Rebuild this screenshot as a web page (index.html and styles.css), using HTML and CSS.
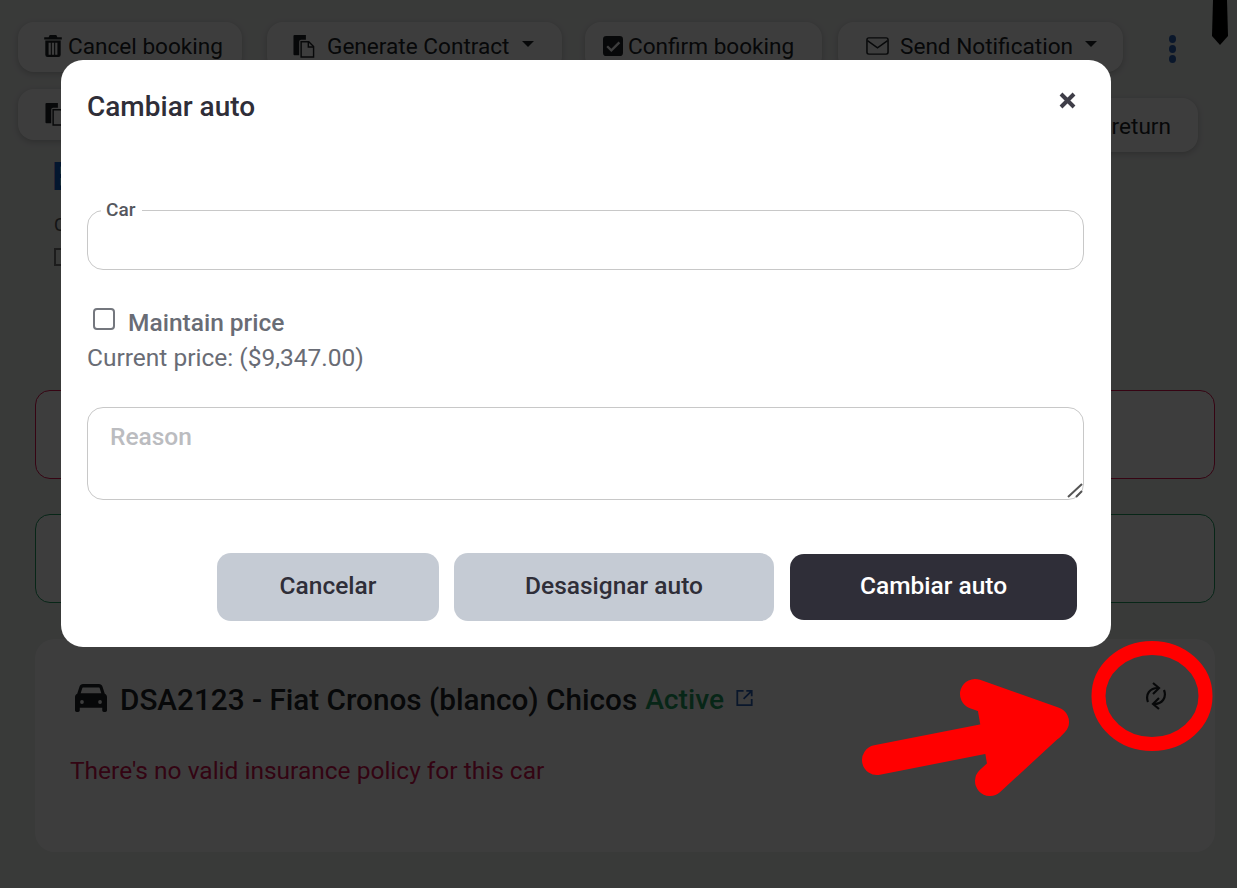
FILE: index.html
```html
<!DOCTYPE html>
<html>
<head>
    <title>Booking</title>
    <link rel="stylesheet" href="styles.css">
</head>
<body>
    <svg class="user-tie" viewBox="0 0 16 46"><path d="M1 0 L15 0 L16 36 L8 45 L0 36 Z"/></svg>

    <div class="actions">
        <button class="action-btn btn-cancel">
            <svg class="icon-trash" viewBox="0 0 16 20"><path d="M5 0h6l1 2h4v2H0V2h4zM1 5h14v13a2 2 0 0 1-2 2H3a2 2 0 0 1-2-2zm3 2v11h2V7zm3 0v11h2V7zm3 0v11h2V7z" fill-rule="evenodd"/></svg>
            Cancel booking
        </button>
        <button class="action-btn btn-contract">
            <svg class="icon-docs" viewBox="0 0 22 24"><path d="M1 0h12v5H8a2 2 0 0 0-2 2v14H1a1 1 0 0 1-1-1V1a1 1 0 0 1 1-1z"/><path d="M8 7h8l5 5v11H8z" fill="none" stroke="currentColor" stroke-width="1.5"/><path d="M15.500 7v5.500H21" fill="none" stroke="currentColor" stroke-width="1.500"/></svg>
            <span class="gap-text">Generate Contract</span><span class="caret"></span>
        </button>
        <button class="action-btn btn-confirm">
            <svg class="icon-check" viewBox="0 0 18 18"><path d="M3 0h12a3 3 0 0 1 3 3v12a3 3 0 0 1-3 3H3a3 3 0 0 1-3-3V3a3 3 0 0 1 3-3zm11 5-6.500 6.500L4.500 8.500 3 10l4.500 4.500 8-8z" fill-rule="evenodd"/></svg>
            Confirm booking
        </button>
        <button class="action-btn btn-notify">
            <svg class="icon-mail" viewBox="0 0 24 20" preserveAspectRatio="none"><rect x="1" y="1" width="22" height="18" rx="2" fill="none" stroke="currentColor" stroke-width="1.600"/><path d="M1.500 4 12 12l10.500-8" fill="none" stroke="currentColor" stroke-width="1.600"/></svg>
            <span class="gap-text">Send Notification</span><span class="caret"></span>
        </button>
        <div class="kebab"><i></i><i></i><i></i></div>
    </div>

    <div class="actions-second">
        <button class="action-btn btn-docs">
            <svg class="icon-docs" viewBox="0 0 22 24"><path d="M1 0h12v5H8a2 2 0 0 0-2 2v14H1a1 1 0 0 1-1-1V1a1 1 0 0 1 1-1z"/><path d="M8 7h8l5 5v11H8z" fill="none" stroke="currentColor" stroke-width="1.5"/></svg>
        </button>
        <button class="action-btn btn-return">Register return</button>
    </div>

    <div class="booking-head">
        <div class="booking-title">B</div>
        <div class="booking-sub">C</div>
        <div class="booking-box"></div>
    </div>

    <div class="notice notice-red"></div>
    <div class="notice notice-green"></div>

    <div class="car-card">
        <div class="car-top">
            <div class="car-name">
                <svg class="icon-car" viewBox="15 77 482 391" preserveAspectRatio="none"><path fill="currentColor" d="M135 77h242c24 0 45 15 53 38l34 97c20 8 33 27 33 48v184c0 13-11 24-24 24h-24c-13 0-24-11-24-24v-36H87v36c0 13-11 24-24 24H39c-13 0-24-11-24-24V260c0-21 13-40 33-48l34-97c8-23 29-38 53-38zm0 48c-4 0-7 3-8 6l-26 75h310l-26-75c-1-3-4-6-8-6zm-15 177a28 28 0 1 0 0 56 28 28 0 0 0 0-56zm272 0a28 28 0 1 0 0 56 28 28 0 0 0 0-56z" fill-rule="evenodd"/></svg>
                <span>DSA2123 - Fiat Cronos (blanco) Chicos</span>
                <span class="status-active">Active</span>
                <svg class="icon-link" viewBox="0 0 20 20"><path d="M9 2H2v16h16v-7M12 2h6v6M18 2 9 11" fill="none" stroke="currentColor" stroke-width="2"/></svg>
            </div>
            <svg class="icon-swap" viewBox="0 0 22 28" fill="none" stroke="currentColor" stroke-width="2.200"><path d="M3 20C0 12 5 6 13 6"/><path d="M19 8C22 16 17 22 9 22"/><path d="M8 1 14 6 8 12"/><path d="M14 16 8 22 14 27"/></svg>
        </div>
        <p class="car-warning">There's no valid insurance policy for this car</p>
    </div>

    <div class="backdrop"></div>

    <div class="modal">
        <div class="modal-header">
            <h2>Cambiar auto</h2>
            <svg class="modal-close" viewBox="0 0 17 17"><path d="M2 2 15 15M15 2 2 15" fill="none" stroke="currentColor" stroke-width="4"/></svg>
        </div>
        <fieldset class="car-field">
            <legend>Car</legend>
        </fieldset>
        <label class="check-row">
            <input type="checkbox">
            <span>Maintain price</span>
        </label>
        <div class="current-price">Current price: ($9,347.00)</div>
        <div class="reason-wrap">
            <textarea class="reason" placeholder="Reason"></textarea>
            <svg class="grip" viewBox="0 0 16 15"><path d="M1 14 15 1M9 14 15 8" fill="none" stroke="#555" stroke-width="2"/></svg>
        </div>
        <div class="modal-footer">
            <button class="modal-btn btn-grey btn-w1">Cancelar</button>
            <button class="modal-btn btn-grey btn-w2">Desasignar auto</button>
            <button class="modal-btn btn-dark">Cambiar auto</button>
        </div>
    </div>

    <svg class="markup" viewBox="0 0 1237 888">
        <ellipse cx="1152" cy="696" rx="53.500" ry="48" fill="none" stroke="#ff0000" stroke-width="14"/>
        <path d="M877 760 L1050 726" fill="none" stroke="#ff0000" stroke-width="30" stroke-linecap="round"/>
        <path d="M975 694 L1054 722 L990 781" fill="#ff0000" stroke="#ff0000" stroke-width="30" stroke-linejoin="round" stroke-linecap="round"/>
    </svg>
</body>
</html>
```

FILE: styles.css
```css
* { box-sizing: border-box; }
html, body { height: 100%; }
body { margin: 0; height: 888px; overflow: hidden; background: #eef0ef; font-family: Roboto, sans-serif; color: #212529; padding: 22px 18px 0; position: relative; }

.user-tie { position: absolute; top: 0; left: 1212px; width: 16px; height: 46px; fill: #000; }

.actions { display: flex; align-items: center; height: 50px; }
.actions-second { display: flex; justify-content: space-between; align-items: flex-start; width: 1180px; height: 63px; margin-top: 17px; }
.action-btn { display: flex; align-items: center; height: 100%; padding: 0 0 2px 26px; background: #fff; border: none; border-radius: 16px; box-shadow: 0 2px 6px rgba(0, 0, 0, .2); font-family: Roboto, sans-serif; font-size: 22.6px; color: #212529; white-space: nowrap; }
.btn-cancel { width: 224px; gap: 6px; margin-right: 25px; }
.btn-contract { width: 295px; padding-left: 25px; margin-right: 23px; }
.btn-confirm { width: 237px; padding-left: 18px; gap: 5px; margin-right: 16px; }
.btn-notify { width: 285px; padding-left: 28px; }
.btn-docs { width: 220px; height: 51px; padding-bottom: 0; }
.btn-return { width: 300px; height: 54px; margin-top: 9px; padding: 2px 27px 0 0; justify-content: flex-end; }
.gap-text { margin-left: 11px; }
.caret { margin-left: 12px; margin-top: -4px; border-top: 6px solid #212529; border-left: 6px solid transparent; border-right: 6px solid transparent; }
.icon-trash { width: 18px; height: 22px; fill: currentColor; flex: none; }
.icon-check { width: 20px; height: 20px; fill: currentColor; flex: none; }
.icon-docs { width: 24px; height: 23px; fill: currentColor; flex: none; }
.icon-mail { width: 23px; height: 18px; flex: none; }
.kebab { margin: 4px 0 0 46px; display: flex; flex-direction: column; gap: 2px; }
.kebab i { display: block; width: 7px; height: 8px; border-radius: 50%; background: #2a5fb5; }

.booking-head { margin-left: 34px; margin-top: 11px; }
.booking-title { font-size: 39px; line-height: 28px; font-weight: 700; color: #0d5bc6; }
.booking-sub { margin: 25px 0 0 2px; font-size: 18px; line-height: 18px; color: #555; }
.booking-box { margin: 14px 0 0 2px; width: 16px; height: 18px; border: 2px solid #777; }

.notice { width: 1180px; margin-left: 17px; height: 89px; border-radius: 15px; border: 1px solid; background: #fff; }
.notice-red { margin-top: 124px; border-color: #e0134f; }
.notice-green { margin-top: 35px; border-color: #1f9d62; }

.car-card { width: 1180px; height: 213px; margin: 36px 0 0 17px; padding: 40px 35px 0 35px; background: #fff; border-radius: 20px; }
.car-top { display: flex; justify-content: space-between; align-items: flex-start; }
.car-name { display: flex; align-items: flex-start; gap: 8px; font-size: 29.7px; line-height: 42px; font-weight: 500; color: #212529; white-space: nowrap; }
.icon-car { width: 32px; height: 28px; margin: 5px 5px 0 5px; }
.status-active { font-size: 28.2px; color: #1f9d62; }
.icon-link { width: 19px; height: 18px; margin: 10px 0 0 3px; color: #2a5fb5; }
.icon-swap { width: 22px; height: 28px; margin: 3px 13px 0 0; color: #212529; }
.car-warning { margin: 35px 0 0 0; font-size: 24.5px; line-height: 30px; color: #d4134f; }

.backdrop { position: absolute; top: 0; left: 0; width: 100%; height: 100%; background: rgba(0, 0, 0, .76); }

.modal { position: absolute; top: 60px; left: 61px; width: 1050px; height: 587px; padding: 26px 27px 0 26px; background: #fff; border-radius: 22px; color: #2f2e38; }
.modal-header { display: flex; justify-content: space-between; align-items: flex-start; height: 118px; }
.modal-header h2 { margin: 0; font-size: 28px; line-height: 42px; font-weight: 500; color: #2f2e38; }
.modal-close { width: 17px; height: 17px; margin: 6px 8px 0 0; color: #3f3e48; }

.car-field { margin: -5px 0 0 0; padding: 0 0 0 13px; height: 71px; border: 1px solid #c8c8c8; border-radius: 16px; }
.car-field legend { padding: 0 7px 2px 5px; font-size: 19px; line-height: 21px; font-weight: 500; color: #55575e; }

.check-row { display: flex; align-items: flex-start; margin: 38px 0 0 6px; gap: 13px; font-size: 24.5px; line-height: 28px; font-weight: 500; color: #696c75; }
.check-row input { width: 22px; height: 22px; margin: 0; appearance: none; border: 2px solid #74777e; border-radius: 4px; background: #fff; }
.check-row span { padding-top: 1px; }
.current-price { margin-top: 6px; font-size: 24.5px; line-height: 30px; color: #696c75; }

.reason-wrap { position: relative; margin-top: 34px; }
.reason { display: block; width: 997px; height: 93px; padding: 14px 22px; border: 1px solid #c8c8c8; border-radius: 16px; font-family: Roboto, sans-serif; font-size: 24.5px; font-weight: 500; outline: none; resize: none; }
.reason::placeholder { color: #bbbcc0; }
.grip { position: absolute; right: 1px; bottom: 2px; width: 16px; height: 15px; }

.modal-footer { display: flex; justify-content: flex-end; align-items: center; gap: 15px; margin: 53px 7px 0 0; }
.modal-btn { height: 68px; padding: 0 0 4px; border: none; border-radius: 14px; font-family: Roboto, sans-serif; font-size: 24.5px; font-weight: 500; }
.btn-grey { background: #c5cbd4; color: #2f2e38; }
.btn-w1 { width: 222px; }
.btn-w2 { width: 320px; margin-right: 1px; }
.btn-dark { width: 287px; height: 66px; background: #2f2e38; color: #fff; }

.markup { position: absolute; top: 0; left: 0; width: 1237px; height: 888px; pointer-events: none; }
```
